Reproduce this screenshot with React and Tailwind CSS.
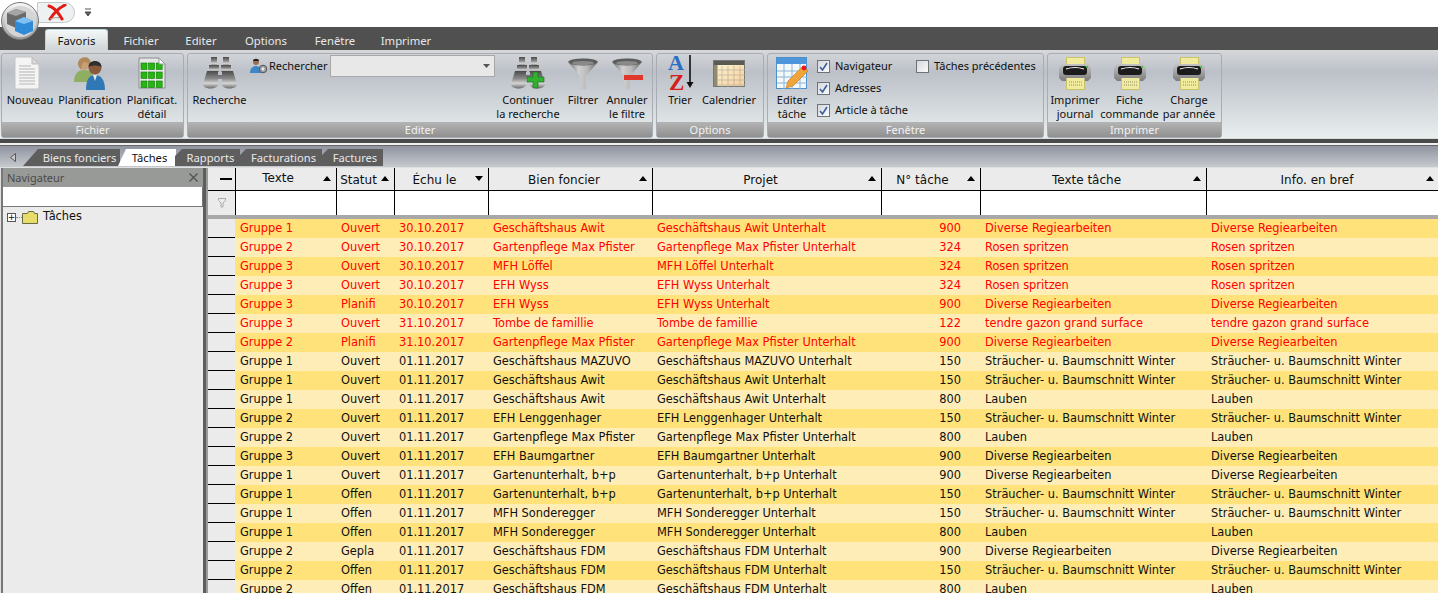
import React from "react";

const GRID_COLS = "grid grid-cols-[101px_58px_94px_164px_229px_99px_226px_233px]";

const D = "Diverse Regiearbeiten";
const R = "Rosen spritzen";
const S = "Sträucher- u. Baumschnitt Winter";
const L = "Lauben";
const T = "tendre gazon grand surface";

const rows = [
  ["Gruppe 1", "Ouvert", "30.10.2017", "Geschäftshaus Awit", "900", D, 1],
  ["Gruppe 2", "Ouvert", "30.10.2017", "Gartenpflege Max Pfister", "324", R, 1],
  ["Gruppe 3", "Ouvert", "30.10.2017", "MFH Löffel", "324", R, 1],
  ["Gruppe 3", "Ouvert", "30.10.2017", "EFH Wyss", "324", R, 1],
  ["Gruppe 3", "Planifi", "30.10.2017", "EFH Wyss", "900", D, 1],
  ["Gruppe 3", "Ouvert", "31.10.2017", "Tombe de famillie", "122", T, 1, "Tombe de famillie"],
  ["Gruppe 2", "Planifi", "31.10.2017", "Gartenpflege Max Pfister", "900", D, 1],
  ["Gruppe 1", "Ouvert", "01.11.2017", "Geschäftshaus MAZUVO", "150", S],
  ["Gruppe 1", "Ouvert", "01.11.2017", "Geschäftshaus Awit", "150", S],
  ["Gruppe 1", "Ouvert", "01.11.2017", "Geschäftshaus Awit", "800", L],
  ["Gruppe 2", "Ouvert", "01.11.2017", "EFH Lenggenhager", "150", S],
  ["Gruppe 2", "Ouvert", "01.11.2017", "Gartenpflege Max Pfister", "800", L],
  ["Gruppe 3", "Ouvert", "01.11.2017", "EFH Baumgartner", "900", D],
  ["Gruppe 1", "Ouvert", "01.11.2017", "Gartenunterhalt, b+p", "900", D],
  ["Gruppe 1", "Offen", "01.11.2017", "Gartenunterhalt, b+p", "150", S],
  ["Gruppe 1", "Offen", "01.11.2017", "MFH Sonderegger", "150", S],
  ["Gruppe 1", "Offen", "01.11.2017", "MFH Sonderegger", "800", L],
  ["Gruppe 2", "Gepla", "01.11.2017", "Geschäftshaus FDM", "900", D],
  ["Gruppe 2", "Offen", "01.11.2017", "Geschäftshaus FDM", "150", S],
  ["Gruppe 2", "Offen", "01.11.2017", "Geschäftshaus FDM", "800", L],
];

const headers = [
  ["Texte", "up", "pr-[16px] leading-[20px]"],
  ["Statut", "up", "pr-[14px] leading-[24px]"],
  ["Échu le", "down", "pr-[14px] leading-[24px]"],
  ["Bien foncier", "up", "pr-[13px] leading-[24px]"],
  ["Projet", "up", "pr-[13px] leading-[24px]"],
  ["N° tâche", "up", "pr-[17px] leading-[24px]"],
  ["Texte tâche", "up", "pr-[14px] leading-[24px]"],
  ["Info. en bref", "up", "pr-[12px] leading-[24px]"],
];

function Doc() {
  return (
    <svg width="28" height="34" viewBox="0 0 28 34" className="mr-[7px]">
      <path d="M2 1h17l7 7v25H2z" fill="#f4f4f4" stroke="#c4c4c4" />
      <path d="M19 1v7h7z" fill="#d8d8d8" stroke="#bbb" />
      <path d="M6 10h12M6 13h16M6 16h16M6 19h16M6 22h16M6 25h16M6 28h16" stroke="#b5b5b5" />
    </svg>
  );
}

function People() {
  return (
    <svg width="34" height="34" viewBox="0 0 34 34">
      <circle cx="11" cy="8" r="6" fill="#c99f78" />
      <path d="M5 9c-1-9 12-11 13-2l-1 3c-1-4-7-5-8-2l-1 6z" fill="#b08a5a" />
      <path d="M1 26c0-8 4-12 10-12s9 3 9 8v4z" fill="#8fae62" />
      <circle cx="22" cy="12" r="6.5" fill="#8a5a3c" />
      <path d="M15.500 11c0-8 13-8 13 0-3-2-10-2-13 0z" fill="#2e2e2e" />
      <path d="M13 34c0-10 3-15 9-15s10 5 10 15z" fill="#2f78b5" />
      <path d="M20 19h4l-2 6z" fill="#e8e8e8" />
    </svg>
  );
}

function Sheet() {
  const cells = [];
  for (let r = 0; r < 3; r++) {
    for (let c = 0; c < 3; c++) {
      cells.push(<rect key={r + "-" + c} x={3 + c * 7.6} y={6 + r * 9} width="6" height="6.5" fill="#27b511" stroke="#0f7a08" strokeWidth="0.6" />);
    }
  }
  return (
    <svg width="28" height="32" viewBox="0 0 28 32">
      <path d="M1 1h20l6 6v24H1z" fill="#e6e6e6" stroke="#8c8c8c" />
      {cells}
      <path d="M21 1v6h6z" fill="#fff" stroke="#999" />
    </svg>
  );
}

function Binoculars({ plus }) {
  return (
    <svg width="34" height="32" viewBox="0 0 34 32">
      <defs>
        <linearGradient id={plus ? "binoB" : "binoA"} x1="0" x2="0" y1="0" y2="1">
          <stop offset="0" stopColor="#4a4a4a" />
          <stop offset="0.45" stopColor="#8c8c8c" />
          <stop offset="0.7" stopColor="#d6d6d6" />
          <stop offset="1" stopColor="#6a6a6a" />
        </linearGradient>
      </defs>
      <g fill={`url(#${plus ? "binoB" : "binoA"})`}>
        <path d="M8 0h6v9H8zM20 0h6v9h-6z" />
        <path d="M6 8h10v7H6zM18 8h10v7H18z" />
        <path d="M4 14h11v4h4v-4h11l4 13c0 6-15 6-15 0v-5h-4v5c0 6-15 6-15 0z" />
      </g>
      {plus && <path d="M22 15h5v5h6v5h-6v6h-5v-6h-6v-5h6z" fill="#2fb02f" stroke="#16701a" strokeWidth="0.6" />}
    </svg>
  );
}

function Funnel({ id, minus }) {
  return (
    <svg width="32" height="33" viewBox="0 0 32 33">
      <defs>
        <linearGradient id={id} x1="0" x2="1" y1="0" y2="0">
          <stop offset="0" stopColor="#6a6a6a" />
          <stop offset="0.35" stopColor="#d0d0d0" />
          <stop offset="0.65" stopColor="#b8b8b8" />
          <stop offset="1" stopColor="#666" />
        </linearGradient>
      </defs>
      <path d="M1 5c3-5 27-5 30 0L19 19v13h-6V19z" fill={`url(#${id})`} />
      <ellipse cx="16" cy="5" rx="14" ry="3.500" fill="#5c5c5c" />
      <ellipse cx="16" cy="6" rx="11" ry="2" fill="#8a8a8a" />
      {minus && <rect x="13" y="18" width="19" height="5" fill="#e0362c" />}
    </svg>
  );
}

function SortAz() {
  return (
    <svg width="28" height="36" viewBox="0 0 28 36" className="ml-[3px]">
      <text x="0" y="15" fontFamily="Liberation Serif" fontWeight="700" fontSize="22" fill="#2a6fc4">A</text>
      <text x="1" y="35" fontFamily="Liberation Serif" fontWeight="700" fontSize="23" fill="#d4201a">Z</text>
      <path d="M22 0v28" stroke="#111" strokeWidth="1.6" />
      <path d="M18.500 27h7l-3.500 6z" fill="#111" />
    </svg>
  );
}

function CalendarIcon() {
  const lines = [];
  for (let i = 0; i < 4; i++) lines.push(<path key={"v" + i} d={`M${9 + i * 6} 6v21`} stroke="#b9b09a" strokeWidth="0.7" />);
  for (let i = 0; i < 4; i++) lines.push(<path key={"h" + i} d={`M5 ${10 + i * 5}h27`} stroke="#b9b09a" strokeWidth="0.7" />);
  return (
    <svg width="32" height="27" viewBox="0 0 32 27">
      <defs>
        <linearGradient id="calFill" x1="0" x2="1" y1="0" y2="1">
          <stop offset="0" stopColor="#fff7d8" />
          <stop offset="1" stopColor="#f5cf9c" />
        </linearGradient>
      </defs>
      <rect x="0.5" y="0.5" width="31" height="26" fill="url(#calFill)" stroke="#777" />
      <rect x="1" y="1" width="30" height="4" fill="#5a5a52" />
      <rect x="1" y="5" width="3.5" height="21" fill="#8f8a70" />
      {lines}
    </svg>
  );
}

function EditTable() {
  return (
    <svg width="32" height="32" viewBox="0 0 32 32">
      <rect x="0.5" y="0.5" width="30" height="31" fill="#f4f8fb" stroke="#4f8fcc" />
      <rect x="1" y="1" width="29" height="6" fill="#4d96dc" />
      <path d="M1 14h30M1 20h30M1 26h30M8 7v25M16 7v25M24 7v25" stroke="#8ab4d8" />
      <path d="M10 31l2-7 15-15 5 5-15 15z" fill="#f0a43a" stroke="#b87820" strokeWidth="0.6" />
      <circle cx="28" cy="11" r="2.4" fill="#f01818" />
    </svg>
  );
}

function Printer({ id }) {
  return (
    <svg width="32" height="33" viewBox="0 0 32 33">
      <defs>
        <linearGradient id={id} x1="0" x2="0" y1="0" y2="1">
          <stop offset="0" stopColor="#c4c4c4" />
          <stop offset="1" stopColor="#7c7c7c" />
        </linearGradient>
      </defs>
      <rect x="7.5" y="0.5" width="18" height="8" fill="#f1ec9d" stroke="#c9c46c" />
      <rect x="7.5" y="21.5" width="18" height="11" fill="#f1ec9d" stroke="#c9c46c" />
      <path d="M10 25h13M10 28h13" stroke="#8f8a68" strokeDasharray="1 1" />
      <path d="M3 7h26l3 4v10l-3 3H3l-3-3V11z" fill={`url(#${id})`} />
      <rect x="4" y="9" width="24" height="9" rx="3" fill="#1c1c1c" />
      <path d="M7 12c6-2 12-2 18 0" stroke="#f4f4f4" strokeWidth="1.2" fill="none" />
      <rect x="27" y="9" width="2" height="2" fill="#40c040" />
      <rect x="7.5" y="21" width="18" height="3" fill="#f1ec9d" />
    </svg>
  );
}

function SearchUser() {
  return (
    <svg width="18" height="16" viewBox="0 0 18 16">
      <circle cx="6" cy="4" r="3" fill="#9a6f50" />
      <path d="M3 3c0-3 6-3 6 0z" fill="#222" />
      <path d="M0 15c0-5 3-7 6-7s5 2 5 7z" fill="#3f86c8" />
      <circle cx="13" cy="11" r="3.8" fill="#9aa0a6" stroke="#555" />
      <circle cx="13" cy="11" r="1.4" fill="#eee" />
    </svg>
  );
}

function Big({ w, icon, lines, h = "h-[36px]" }) {
  return (
    <div className={`flex flex-col items-center ${w}`}>
      <div className={`flex items-center justify-center ${h}`}>{icon}</div>
      <div className="mt-[2px] text-center leading-[13.5px] whitespace-nowrap">
        {lines.map((l) => (
          <div key={l}>{l}</div>
        ))}
      </div>
    </div>
  );
}

function Group({ w, title, children, className = "" }) {
  return (
    <div className={`flex flex-col h-[85px] rounded-[3px] border border-[#a9adb3] shrink-0 ${w}`}>
      <div className={`flex-1 flex ${className}`}>{children}</div>
      <div className="h-[15px] leading-[15px] text-center text-[#f2f2f2] bg-gradient-to-b from-[#b4b4b4] to-[#909090]">{title}</div>
    </div>
  );
}

function Check({ on, label }) {
  return (
    <div className="flex items-center h-[14px] gap-[5px] whitespace-nowrap">
      <span className="w-[13px] h-[13px] border border-[#6f7378] bg-gradient-to-br from-[#d6d8dc] to-[#fbfbfb] flex items-center justify-center">
        {on && (
          <svg width="9" height="9" viewBox="0 0 9 9">
            <path d="M1 5l2.5 3L8 1" fill="none" stroke="#3a5f9a" strokeWidth="1.6" />
          </svg>
        )}
      </span>
      <span>{label}</span>
    </div>
  );
}

function Caret({ dir }) {
  return (
    <svg width="8" height="5" viewBox="0 0 8 5" className="absolute right-[5px] top-[8px]">
      <path d={dir === "up" ? "M0 5h8L4 0z" : "M0 0h8L4 5z"} fill="#000" />
    </svg>
  );
}

function BgTab({ w, label, className = "pl-[6px] [clip-path:polygon(7px_0,100%_0,100%_100%,0_100%,0_7px)]" }) {
  return (
    <div className={`relative h-[17px] -ml-[1px] text-center leading-[18px] text-[#e8e8e8] bg-[#5e5e5e] ${className} ${w}`}>
      {label}
    </div>
  );
}

export default function App() {
  return (
    <div className="relative w-[1438px] h-[593px] overflow-hidden bg-white text-[11.4px] text-[#101010] font-['DejaVu_Sans',sans-serif]">
      {/* quick access */}
      <div className="relative h-[27px] bg-white">
        <div className="absolute left-[37px] top-[2px] w-[38px] h-[21px] rounded-r-[12px] border border-[#c4c8c8] bg-[#eef1f1] flex items-center justify-center pl-[2px]">
          <svg width="20" height="17" viewBox="0 0 20 17">
            <path d="M2 2c5 1 9 6 13 13" fill="none" stroke="#e11b16" strokeWidth="3" strokeLinecap="round" />
            <path d="M18 1C12 4 7 9 3 15" fill="none" stroke="#e11b16" strokeWidth="3" strokeLinecap="round" />
            <path d="M3 15c3-1 6-2 9-1" fill="none" stroke="#9a9a9a" strokeWidth="1" />
          </svg>
        </div>
        <svg width="8" height="9" viewBox="0 0 8 9" className="absolute left-[84px] top-[8px]">
          <path d="M1 1h6M1 4h6L4 8z" stroke="#555" fill="#555" />
        </svg>
      </div>

      {/* app button sits over the tab bar */}
      <div className="absolute left-[1px] top-[2px] w-[38px] h-[38px] rounded-full bg-gradient-to-b from-[#f8f8f8] to-[#9b9b9b] border border-[#777] flex items-center justify-center z-10">
        <div className="w-[31px] h-[31px] rounded-full bg-[#d5d5d5] flex items-center justify-center">
          <svg width="30" height="28" viewBox="0 0 30 28">
            <path d="M2 6l9-4 10 3v12l-10 4-9-4z" fill="#6a6a6a" />
            <path d="M2 6l9 3 10-4-10-3z" fill="#a5a5a5" />
            <path d="M10 14l9-4 9 4v10l-9 4-9-4z" fill="#2f8ad8" />
            <path d="M10 14l9 3 9-3-9-4z" fill="#7ec1f2" />
          </svg>
        </div>
      </div>

      {/* menu tabs */}
      <div className="h-[23px] bg-[#505050] flex pl-[45px] text-[11.3px] text-[#e8e8e8] font-['Noto_Sans',sans-serif]">
        <div className="mt-[2px] h-[21px] w-[63px] rounded-t-[3px] border border-b-0 border-[#b9d5d8] bg-gradient-to-b from-[#f4f8f8] to-[#cfd5d8] text-[#101010] text-center leading-[22px]">Favoris</div>
        <div className="flex leading-[27px] text-center">
          <div className="w-[66px]">Fichier</div>
          <div className="w-[54px]">Editer</div>
          <div className="w-[76px]">Options</div>
          <div className="w-[62px]">Fenêtre</div>
          <div className="w-[80px]">Imprimer</div>
        </div>
      </div>

      {/* ribbon */}
      <div className="h-[89px] bg-gradient-to-b from-[#d6d8da] via-[#bcc0c8] via-25% to-[#e9efef] flex gap-[3px] pl-[1px] pt-[3px] border-b border-[#d8dcdc] text-[11px] font-['Noto_Sans',sans-serif]">
        <Group w="w-[183px]" title="Fichier" className="pl-[4px] pt-[1px]">
          <Big w="w-[48px]" icon={<Doc />} lines={["Nouveau"]} />
          <Big w="w-[72px]" icon={<People />} lines={["Planification", "tours"]} />
          <Big w="w-[52px]" icon={<Sheet />} lines={["Planificat.", "détail"]} />
        </Group>
        <Group w="w-[466px]" title="Editer" className="pl-[4px] pt-[1px]">
          <Big w="w-[55px]" icon={<Binoculars />} lines={["Recherche"]} />
          <div className="w-[249px] flex items-start pl-[3px]">
            <div className="w-[80px] flex items-center gap-[1px] mt-[3px] whitespace-nowrap">
              <SearchUser />
              <span>Rechercher</span>
            </div>
            <div className="relative h-[22px] w-[165px] border border-[#a8a8a8] bg-[#e8e8e8]">
              <svg width="7" height="4" viewBox="0 0 7 4" className="absolute right-[4px] top-[8px]">
                <path d="M0 0h7L3.5 4z" fill="#555" />
              </svg>
            </div>
          </div>
          <Big w="w-[64px]" icon={<Binoculars plus />} lines={["Continuer", "la recherche"]} />
          <Big w="w-[46px]" icon={<Funnel id="fa" />} lines={["Filtrer"]} />
          <Big w="w-[42px]" icon={<Funnel id="fb" minus />} lines={["Annuler", "le filtre"]} />
        </Group>
        <Group w="w-[108px]" title="Options" className="pl-[8px] pt-[1px]">
          <Big w="w-[30px]" icon={<SortAz />} lines={["Trier"]} />
          <Big w="w-[74px]" icon={<CalendarIcon />} lines={["Calendrier"]} />
        </Group>
        <Group w="w-[277px]" title="Fenêtre" className="pl-[8px] pt-[1px]">
          <Big w="w-[32px]" icon={<EditTable />} lines={["Editer", "tâche"]} />
          <div className="w-[99px] ml-[9px] mt-[4px] flex flex-col gap-[8px]">
            <Check on label="Navigateur" />
            <Check on label="Adresses" />
            <Check on label="Article à tâche" />
          </div>
          <div className="mt-[4px]">
            <Check label="Tâches précédentes" />
          </div>
        </Group>
        <Group w="w-[175px]" title="Imprimer" className="pl-[2px] pt-[1px]">
          <Big w="w-[50px]" icon={<Printer id="pa" />} lines={["Imprimer", "journal"]} />
          <Big w="w-[59px]" icon={<Printer id="pb" />} lines={["Fiche", "commande"]} />
          <Big w="w-[60px]" icon={<Printer id="pc" />} lines={["Charge", "par année"]} />
        </Group>
      </div>

      {/* document tabs strip */}
      <div className="h-[4px] bg-[#4a4a4a]" />
      <div className="h-[2px] bg-[#f0f0f0]" />
      <div className="h-[22px] border-t border-[#666] bg-gradient-to-b from-[#8f94a0] to-[#c6c9cd] flex items-end pl-[2px] pb-[1px] text-[11.2px] font-['Noto_Sans',sans-serif]">
        <div className="w-[22px] h-[17px] flex items-center justify-center">
          <svg width="6" height="9" viewBox="0 0 6 9">
            <path d="M5.5 0.5v8L0.5 4.5z" fill="#c8c8c8" stroke="#555" />
          </svg>
        </div>
        <BgTab w="w-[97px]" label="Biens fonciers" className="pl-[16px] [clip-path:polygon(15px_0,100%_0,100%_100%,0_100%)]" />
        <div className="relative h-[17px] -ml-[2px] w-[58px] bg-white text-[#101010] text-center leading-[18px] pl-[5px] [clip-path:polygon(8px_0,100%_0,100%_100%,0_100%)]">Tâches</div>
        <BgTab w="w-[65px]" label="Rapports" />
        <BgTab w="w-[83px]" label="Facturations" />
        <BgTab w="w-[62px]" label="Factures" />
      </div>

      {/* body */}
      <div className="flex h-[426px] overflow-hidden bg-[#e0e0e0] pt-[1px]">
        {/* navigator */}
        <div className="w-[202px] ml-[1px] border-l-2 border-[#777] bg-[#ebebeb] shrink-0">
          <div className="h-[19px] bg-[#989a98] text-[#4a4a4a] text-[11px] leading-[20px] flex justify-between pl-[4px] pr-[5px] font-['Noto_Sans',sans-serif]">
            <span>Navigateur</span>
            <svg width="9" height="9" viewBox="0 0 9 9" className="mt-[5px]">
              <path d="M0.5 0.5l8 8M8.5 0.5l-8 8" stroke="#555" strokeWidth="1.4" />
            </svg>
          </div>
          <div className="h-[20px] bg-white border-b border-[#777] border-r" />
          <div className="flex items-center h-[18px] mt-[1px] pl-[4px]">
            <span className="w-[9px] h-[9px] border border-[#555] bg-white flex items-center justify-center text-[9px] leading-none">+</span>
            <span className="w-[6px] border-t border-dotted border-[#888]" />
            <svg width="16" height="13" viewBox="0 0 16 13" className="mr-[5px]">
              <path d="M0.5 2.5h5l1-2h5l1 2h3v10h-15z" fill="#e8dc6a" stroke="#6a6a40" />
            </svg>
            <span>Tâches</span>
          </div>
        </div>

        {/* splitter */}
        <div className="w-[5px] bg-[#5d5d5d] shrink-0 border-r-2 border-[#9a9a9a]" />

        {/* grid */}
        <div className="flex-1 min-w-0 bg-white">
          <div className="flex">
            <div className="w-[27px] shrink-0">
              <div className="h-[23px] bg-[#ebebeb] border-b border-black flex items-center justify-center pl-[8px]">
                <span className="w-[12px] h-[2px] bg-black" />
              </div>
              <div className="h-[24px] bg-[#ebebeb] flex items-center justify-center pl-[1px]">
                <svg width="8" height="10" viewBox="0 0 8 10">
                  <path d="M0.5 0.5h7v2L5 5v4H3V5L0.5 2.5z" fill="none" stroke="#aaa" />
                </svg>
              </div>
            </div>
            <div className="flex-1">
              <div className={`${GRID_COLS} h-[23px] bg-[#ebebeb] border-b border-black`}>
                {headers.map(([label, dir, cls]) => (
                  <div key={label} className={`relative border-l border-black text-center text-[12px] ${cls}`}>
                    {label}
                    <Caret dir={dir} />
                  </div>
                ))}
              </div>
              <div className={`${GRID_COLS} h-[24px] bg-white`}>
                {headers.map(([label]) => (
                  <div key={label} className="border-l border-black" />
                ))}
              </div>
            </div>
          </div>
          <div className="h-[4px] bg-[#a8a8a8]" />
          {rows.map((r, i) => (
            <div key={i} className="flex h-[19px]">
              <div className="w-[27px] shrink-0 bg-[#ebebeb] border-b border-black" />
              <div className={`${GRID_COLS} flex-1 leading-[18px] whitespace-nowrap ${i % 2 ? "bg-[#ffedb8]" : "bg-[#ffe37a]"} ${r[6] ? "text-[#ff0000]" : "text-[#101010]"}`}>
                <div className="pl-[5px]">{r[0]}</div>
                <div className="pl-[5px]">{r[1]}</div>
                <div className="pl-[5px]">{r[2]}</div>
                <div className="pl-[5px]">{r[3]}</div>
                <div className="pl-[5px]">{r[7] || r[3] + " Unterhalt"}</div>
                <div className="text-right pr-[19px]">{r[4]}</div>
                <div className="pl-[5px]">{r[5]}</div>
                <div className="pl-[5px]">{r[5]}</div>
              </div>
            </div>
          ))}
        </div>
      </div>
    </div>
  );
}
